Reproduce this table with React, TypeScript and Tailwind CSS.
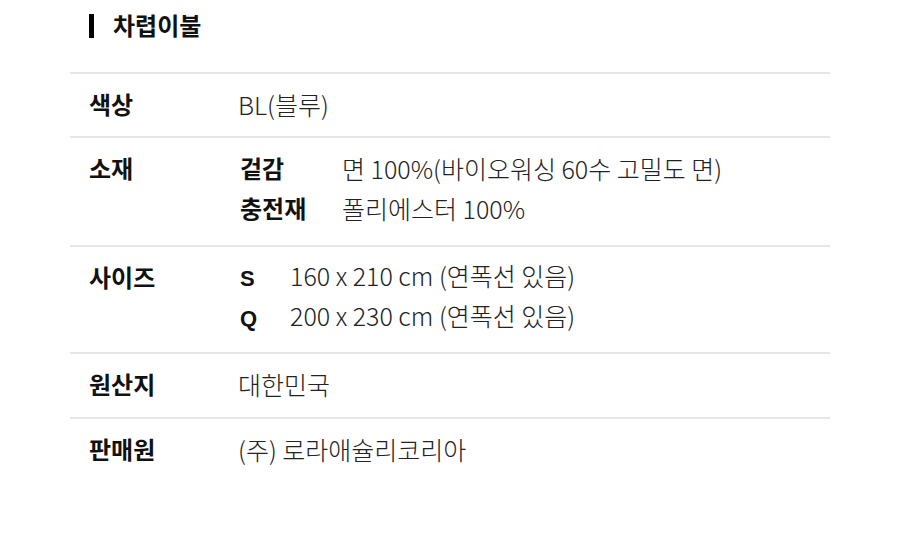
const font = { fontFamily: '"Noto Sans CJK KR", "Noto Sans", sans-serif' };

function Row({
  label,
  height,
  children,
}: {
  label: string;
  height: string;
  children: React.ReactNode;
}) {
  return (
    <div className={`flex border-t-2 border-[#e6e6e6] pt-[10px] ${height}`}>
      <div className="w-[168px] shrink-0 pl-[19px] text-[24px] font-bold text-[#111]">{label}</div>
      <div className="flex-1 font-light text-[#222]">{children}</div>
    </div>
  );
}

function SizeLine({ code, value }: { code: string; value: string }) {
  return (
    <div className="h-[40px]">
      <span className="inline-block w-[52px] pl-[2px] align-baseline font-['Liberation_Sans',sans-serif] text-[22px] leading-[20px] font-bold text-[#111]">
        {code}
      </span>
      <span>{value}</span>
    </div>
  );
}

export default function App() {
  return (
    <div className="min-h-[549px] w-[900px] bg-white text-[25px] leading-[40px]" style={font}>
      <div className="mx-[70px] w-[760px]">
        <div className="flex h-[72px] items-start pt-[5px] pl-[19px]">
          <span className="mt-[9px] h-[24px] w-[5px] bg-black" />
          <span className="ml-[19px] text-[24px] font-bold text-[#111]">차렵이불</span>
        </div>

        <Row label="색상" height="h-[64px]">
          BL(블루)
        </Row>

        <Row label="소재" height="h-[109px]">
          <div className="flex">
            <span className="w-[104px] pl-[2px] text-[24px] font-bold text-[#111]">겉감</span>
            <span>면 100%(바이오워싱 60수 고밀도 면)</span>
          </div>
          <div className="flex">
            <span className="w-[104px] pl-[2px] text-[24px] font-bold text-[#111]">충전재</span>
            <span>폴리에스터 100%</span>
          </div>
        </Row>

        <Row label="사이즈" height="h-[107px]">
          <div className="-mt-[2px]">
            <SizeLine code="S" value="160 x 210 cm (연폭선 있음)" />
            <SizeLine code="Q" value="200 x 230 cm (연폭선 있음)" />
          </div>
        </Row>

        <Row label="원산지" height="h-[65px]">
          대한민국
        </Row>

        <Row label="판매원" height="h-[70px]">
          (주) 로라애슐리코리아
        </Row>
      </div>
    </div>
  );
}
